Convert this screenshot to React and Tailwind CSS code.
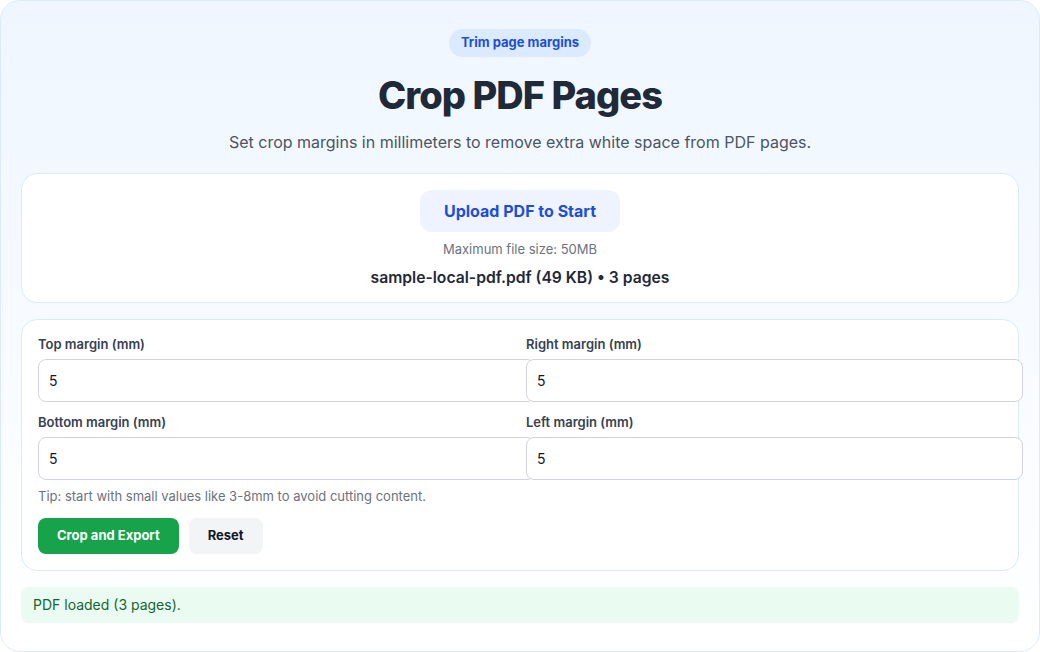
import React, { useState } from 'react'

const fields = [
    { key: 'top', label: 'Top margin (mm)' },
    { key: 'right', label: 'Right margin (mm)' },
    { key: 'bottom', label: 'Bottom margin (mm)' },
    { key: 'left', label: 'Left margin (mm)' },
]

function MarginField({ label, value, onChange }) {
    return (
        <label className="flex flex-col">
            <span className="text-[13px] leading-4 font-semibold text-[#374151] mb-[7px]">{label}</span>
            <input
                type="number"
                value={value}
                onChange={(e) => onChange(e.target.value)}
                className="w-[calc(100%+21px)] h-[43px] px-[10px] rounded-lg border border-[#d1d5db] bg-white text-sm text-[#111827] outline-none"
            />
        </label>
    )
}

export default function App() {
    const [margins, setMargins] = useState({ top: '5', right: '5', bottom: '5', left: '5' })

    return (
        <div className="w-[1040px] h-[652px] font-['Inter',sans-serif]">
            <div className="h-full rounded-[20px] border border-[#dbeafe] bg-gradient-to-b from-[#eff6ff] to-white px-5 py-7 flex flex-col items-center">
                <span className="px-3 h-7 flex items-center rounded-full bg-[#dbeafe] text-[13px] font-bold text-[#1d4ed8]">
                    Trim page margins
                </span>
                <h1 className="mt-3.5 text-[38px] leading-[48px] font-extrabold tracking-tight text-[#1f2937]">
                    Crop PDF Pages
                </h1>
                <p className="mt-[11px] text-base leading-6 text-[#4b5563]">
                    Set crop margins in millimeters to remove extra white space from PDF pages.
                </p>

                <div className="mt-[19px] w-full flex flex-col gap-4">
                    {/* upload */}
                    <div className="rounded-2xl border border-[#dbeafe] bg-white pt-4 pb-3 flex flex-col items-center">
                        <button className="w-[200px] h-[42px] rounded-xl bg-[#eef3ff] text-base font-bold text-[#1d4ed8]">
                            Upload PDF to Start
                        </button>
                        <div className="mt-2 text-[13px] leading-[18px] text-[#6b7280]">Maximum file size: 50MB</div>
                        <div className="mt-2 text-[15.7px] leading-6 font-semibold text-[#1f2937]">
                            sample-local-pdf.pdf (49 KB) • 3 pages
                        </div>
                    </div>

                    {/* form */}
                    <div className="rounded-2xl border border-[#dbeafe] bg-white p-4">
                        <div className="grid grid-cols-2 gap-3">
                            {fields.map((f) => (
                                <MarginField
                                    key={f.key}
                                    label={f.label}
                                    value={margins[f.key]}
                                    onChange={(v) => setMargins({ ...margins, [f.key]: v })}
                                />
                            ))}
                        </div>
                        <p className="mt-2 text-[13px] leading-4 text-[#6b7280]">
                            Tip: start with small values like 3-8mm to avoid cutting content.
                        </p>
                        <div className="mt-3.5 flex gap-2.5">
                            <button className="h-9 px-[19px] rounded-lg bg-[#16a34a] text-[13px] font-bold text-white">
                                Crop and Export
                            </button>
                            <button className="h-9 px-[19px] rounded-lg bg-[#f3f4f6] text-[13px] font-bold text-[#111827]">
                                Reset
                            </button>
                        </div>
                    </div>

                    {/* status */}
                    <div className="h-9 px-3 flex items-center rounded-lg bg-[#eafbf2] text-sm text-[#166534]">
                        PDF loaded (3 pages).
                    </div>
                </div>
            </div>
        </div>
    )
}
